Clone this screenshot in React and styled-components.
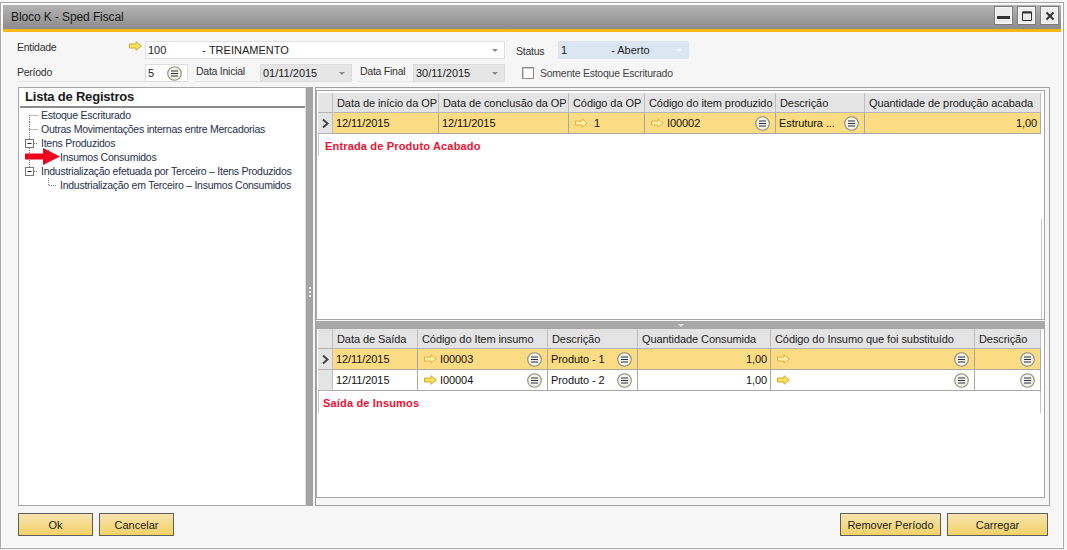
import styled, { createGlobalStyle, css } from "styled-components";

const GlobalStyle = createGlobalStyle`
  html, body {
    margin: 0;
    padding: 0;
    background: #fff;
    overflow: hidden;
  }
  body {
    font-family: "Liberation Sans", Arial, sans-serif;
    font-size: 11px;
    color: #1c1c1c;
  }
  * { box-sizing: border-box; }
`;

const narrowText = css`
  font-size: 10.5px;
  letter-spacing: -0.25px;
`;

const Page = styled.div`
  width: 1067px;
  height: 550px;
  padding: 2px 3px 1px 0;
  background: #f6f6f6;
`;

const Win = styled.div`
  height: 547px;
  border: 1px solid #a6a6a6;
  background: #f6f6f6;
  display: flex;
  flex-direction: column;
  box-shadow: inset 0 0 0 1px #fff;
  padding: 2px 2px 0 2px;
`;

const TitleBar = styled.div`
  height: 27px;
  flex: none;
  background: linear-gradient(#b4b4b4, #8c8c8c);
  border-bottom: 3px solid #fdb913;
  display: flex;
  align-items: center;
  padding: 0 2px 3px 8px;
  font-size: 12px;
  letter-spacing: -0.1px;
  color: #1a1a1a;
`;

const TitleText = styled.span`
  flex: 1;
  padding-top: 2px;
`;

const WinButtons = styled.div`
  display: flex;
  gap: 4px;
`;

const WinBtn = styled.div`
  width: 19px;
  height: 19px;
  background: #ececec;
  border: 1px solid #7c7c7c;
  box-shadow: inset 0 0 0 1px #f7f7f7;
  display: flex;
  align-items: center;
  justify-content: center;
`;

const Body = styled.div`
  flex: 1;
  min-height: 0;
  display: flex;
  flex-direction: column;
  padding: 9px 0 12px 15px;
`;

const HeadGrid = styled.div`
  flex: none;
  display: flex;
  flex-direction: column;
  gap: 5px;
  height: 46px;
`;

const HeadRow = styled.div`
  display: flex;
  height: 18px;
`;

const Label = styled.div`
  ${narrowText}
  width: ${(p) => p.$w}px;
  height: 18px;
  flex: none;
  margin-left: ${(p) => p.$ml || 0}px;
  border-bottom: ${(p) => (p.$plain ? "0" : "1px solid #e4e4e4")};
  display: flex;
  align-items: ${(p) => (p.$top ? "flex-start" : "center")};
  justify-content: space-between;
  padding: ${(p) => p.$pt || 0}px 3px ${(p) => p.$pb || 0}px ${(p) => p.$pl ?? 0}px;
  color: #333;
  white-space: nowrap;
`;

const Field = styled.div`
  width: ${(p) => p.$w}px;
  height: 18px;
  flex: none;
  border: 1px solid ${(p) => p.$border || "#dcdcdc"};
  background: ${(p) => p.$bg || "#fff"};
  display: flex;
  align-items: center;
  padding: 0 2px;
  color: #1c1c1c;
`;

const Gap = styled.span`
  width: ${(p) => p.$w}px;
  flex: none;
`;

const Caret = styled.span`
  margin-left: auto;
  margin-right: 4px;
  width: 0;
  height: 0;
  border-left: 3px solid transparent;
  border-right: 3px solid transparent;
  border-top: 3px solid ${(p) => p.$c || "#8a8a8a"};
`;

const SplitMark = styled(Caret)`
  margin: 3px 0 0;
`;

const Trail = styled.span`
  margin-left: auto;
  margin-right: 3px;
  display: flex;
`;

const CheckWrap = styled.label`
  ${narrowText}
  display: flex;
  align-items: center;
  margin-left: 17px;
  gap: 6px;
  color: #444;
  white-space: nowrap;
`;

const CheckBox = styled.span`
  width: 12px;
  height: 12px;
  background: #fff;
  border: 1px solid #8a8a8a;
  box-shadow: inset 1px 1px 0 #ccc;
`;

const Main = styled.div`
  flex: 1;
  min-height: 0;
  display: flex;
`;

const TreePanel = styled.div`
  width: 288px;
  flex: none;
  background: #fff;
  border: 1px solid #a6a6a6;
  border-right: 1px solid #ddd;
  position: relative;
`;

const TreeHead = styled.div`
  height: 20px;
  margin: 0 0 0 1px;
  border-bottom: 2px solid #8c8c8c;
  padding-left: 5px;
  font-size: 13px;
  font-weight: 700;
  letter-spacing: -0.2px;
  line-height: 18px;
  color: #1a1a1a;
`;

const TreeRow = styled.div`
  ${narrowText}
  display: flex;
  height: 14px;
  align-items: center;
  color: #26304a;
  white-space: nowrap;
`;

const RedArrow = styled.svg`
  position: absolute;
  left: 6px;
  top: 60px;
`;

const VSplit = styled.div`
  width: 9px;
  flex: none;
  display: flex;
  align-items: center;
  justify-content: center;
  background: linear-gradient(90deg, #a4a4a4 0 7px, #f6f6f6 7px);
  padding-right: 2px;
`;

const Dots = styled.div`
  width: 2px;
  height: 12px;
  background: repeating-linear-gradient(#eee 0 2px, transparent 2px 4px);
  margin-bottom: 8px;
`;

const Frame = styled.div`
  width: 735px;
  flex: none;
  border: 1px solid #a0a0a0;
  padding: 2px 4px 6px 0;
  display: flex;
  flex-direction: column;
`;

const Pane = styled.div`
  background: #fff;
  border: 1px solid #a6a6a6;
  padding: ${(p) => p.$pt}px 1px 0 1px;
  height: ${(p) => p.$h}px;
  flex: none;
  display: flex;
  flex-direction: column;
`;

const HSplit = styled.div`
  height: 7px;
  margin-top: 1px;
  flex: none;
  background: #a8a8a8;
  display: flex;
  justify-content: center;
`;

const GridTable = styled.div`
  flex: none;
  display: grid;
  grid-template-columns: ${(p) => p.$cols};
  grid-template-rows: 20px;
  grid-auto-rows: 21px;
  letter-spacing: -0.08px;
`;

const HeadCell = styled.div`
  background: #e4e4e4;
  border-right: 1px solid #bdbdbd;
  border-bottom: 1px solid #b4b4b4;
  display: flex;
  align-items: center;
  padding-left: 4px;
  color: #222;
  white-space: nowrap;
  overflow: hidden;
  &:last-child { border-right: 0; }
`;

const RowHead = styled.div`
  background: #e4e4e4;
  border-right: 1px solid #bdbdbd;
  border-bottom: 1px solid #b4b4b4;
  display: flex;
  align-items: center;
  justify-content: center;
`;

const Cell = styled.div`
  background: ${(p) => (p.$sel ? "#fcdc82" : "#fff")};
  border-right: 1px solid #a8a8a8;
  border-bottom: 1px solid #a8a8a8;
  display: flex;
  align-items: center;
  justify-content: ${(p) => (p.$num ? "flex-end" : "flex-start")};
  padding: 0 ${(p) => (p.$num ? 3 : 5)}px 0 ${(p) => (p.$link ? 6 : 3)}px;
  gap: 3px;
  color: #111;
  white-space: nowrap;
  overflow: hidden;
`;

const CellText = styled.span`
  flex: 1;
`;

const Note = styled.div`
  flex: none;
  height: 22px;
  margin-right: ${(p) => (p.$edge ? 2 : 0)}px;
  border-left: 1px solid #c4c4c4;
  border-right: ${(p) => (p.$edge ? "1px solid #c4c4c4" : "0")};
  color: #ee1133;
  font-weight: 700;
  font-size: 11px;
  letter-spacing: 0.17px;
  padding: 6px 0 0 ${(p) => p.$pl}px;
`;

const PaneRest = styled.div`
  flex: 1;
  margin: 63px 1px 0 0;
  border-right: 1px solid #c4c4c4;
`;

const Footer = styled.div`
  flex: none;
  display: flex;
  justify-content: space-between;
  margin-top: 7px;
  padding-right: 13px;
`;

const BtnGroup = styled.div`
  display: flex;
  gap: 6px;
`;

const Button = styled.button`
  width: ${(p) => p.$w}px;
  height: 23px;
  border: 1px solid #5e5e5e;
  background: linear-gradient(#f6e3ae, #f4d267);
  font: inherit;
  color: #1c1c1c;
  padding: 0;
`;

const LinkArrow = ({ pale }) => (
  <svg width="13" height="10" viewBox="0 0 13 10" style={{ flex: "none" }}>
    <path
      d="M0.5 3 H7 V0.7 L12.3 5 L7 9.3 V7 H0.5 Z"
      fill={pale ? "#fdeca0" : "#fbe35e"}
      stroke={pale ? "#d9b84a" : "#cfa92c"}
      strokeWidth="1"
    />
  </svg>
);

const ChooseIcon = () => (
  <svg width="15" height="15" viewBox="0 0 15 15" style={{ flex: "none" }}>
    <circle cx="7.5" cy="7.5" r="6.8" fill="#f3f1e2" stroke="#8b8b85" strokeWidth="1.1" />
    <path d="M4 5 H11 M4 7.5 H11 M4 10 H11" stroke="#26344f" strokeWidth="1.1" />
  </svg>
);

const RowMark = () => (
  <svg width="7" height="9" viewBox="0 0 7 9">
    <path d="M1 0.5 L5.5 4.5 L1 8.5" fill="none" stroke="#444" strokeWidth="2" />
  </svg>
);

const linesByKind = {
  first: { w: 22, d: "M10.5 7 V14 M10.5 7.5 H19" },
  mid: { w: 22, d: "M10.5 0 V14 M10.5 7.5 H19" },
  open: { w: 22, d: "M10.5 0 V14 M15 7.5 H19", box: true },
  openLast: { w: 22, d: "M10.5 0 V3 M15 7.5 H19", box: true },
  childMid: { w: 41, d: "M10.5 0 V14 M29.5 0 V7.5 H38" },
  childLast: { w: 41, d: "M29.5 0 V7.5 H38" },
};

const TreeLines = ({ kind }) => {
  const { w, d, box } = linesByKind[kind];
  return (
    <svg width={w} height="14" viewBox={`0 0 ${w} 14`} style={{ flex: "none" }}>
      <path d={d} stroke="#777" strokeWidth="1" strokeDasharray="1 1" fill="none" />
      {box && (
        <>
          <rect x="6.5" y="3.5" width="8" height="8" fill="#fff" stroke="#777" />
          <path d="M8.5 7.5 H12.5" stroke="#222" />
        </>
      )}
    </svg>
  );
};

const treeRows = [
  { kind: "first", text: "Estoque Escriturado" },
  { kind: "mid", text: "Outras Movimentações internas entre Mercadorias" },
  { kind: "open", text: "Itens Produzidos" },
  { kind: "childMid", text: "Insumos Consumidos" },
  { kind: "openLast", text: "Industrialização efetuada por Terceiro – Itens Produzidos" },
  { kind: "childLast", text: "Industrialização em Terceiro – Insumos Consumidos" },
];

const topCols = "15px 106px 130px 76px 131px 89px 176px";
const bottomCols = "15px 85px 130px 90px 133px 204px 66px";

const App = () => (
  <Page>
    <GlobalStyle />
    <Win>
      <TitleBar>
        <TitleText>Bloco K - Sped Fiscal</TitleText>
        <WinButtons>
          <WinBtn>
            <svg width="13" height="13" viewBox="0 0 13 13"><rect x="0" y="7" width="13" height="3" fill="#333" /></svg>
          </WinBtn>
          <WinBtn>
            <svg width="10" height="10" viewBox="0 0 10 10"><path d="M0.5 1 H9.5 V9.5 H0.5 Z" fill="none" stroke="#333" strokeWidth="1" /><path d="M0.5 1.5 H9.5" stroke="#333" strokeWidth="2" /></svg>
          </WinBtn>
          <WinBtn>
            <svg width="10" height="10" viewBox="0 0 10 10"><path d="M1.5 1.5 L8.5 8.5 M8.5 1.5 L1.5 8.5" stroke="#333" strokeWidth="2" /></svg>
          </WinBtn>
        </WinButtons>
      </TitleBar>
      <Body>
        <HeadGrid>
          <HeadRow>
            <Label $w={128} $ml={-1} $top $plain>
              Entidade
              <LinkArrow />
            </Label>
            <Field $w={360} $border="#e0e0e0">
              100
              <Gap $w={36} />
              - TREINAMENTO
              <Caret />
            </Field>
            <Label $w={42} $ml={11} $plain $pt={2}>Status</Label>
            <Field $w={131} $bg="#dce6f3" $border="#dce6f3">
              1
              <Gap $w={44} />
              - Aberto
              <Caret $c="#f4f6fa" />
            </Field>
          </HeadRow>
          <HeadRow>
            <Label $w={128} $ml={-1} $pb={2}>Período</Label>
            <Field $w={43}>
              5
              <Trail><ChooseIcon /></Trail>
            </Field>
            <Label $w={66} $ml={6} $pl={2} $pt={1} $top>Data Inicial</Label>
            <Field $w={92} $bg="#e6e6e6">
              01/11/2015
              <Caret />
            </Field>
            <Label $w={55} $ml={6} $pl={2} $pt={1} $top>Data Final</Label>
            <Field $w={92} $bg="#e6e6e6">
              30/11/2015
              <Caret />
            </Field>
            <CheckWrap>
              <CheckBox />
              Somente Estoque Escriturado
            </CheckWrap>
          </HeadRow>
        </HeadGrid>
        <Main>
          <TreePanel>
            <TreeHead>Lista de Registros</TreeHead>
            {treeRows.map((r) => (
              <TreeRow key={r.text}>
                <TreeLines kind={r.kind} />
                {r.text}
              </TreeRow>
            ))}
            <RedArrow width="35" height="17" viewBox="0 0 35 17">
              <path d="M0 5.5 H18 V0 L35 8.5 L18 17 V11.5 H0 Z" fill="#f0001c" />
            </RedArrow>
          </TreePanel>
          <VSplit><Dots /></VSplit>
          <Frame>
            <Pane $h={230} $pt={2}>
              <GridTable $cols={topCols}>
                <HeadCell />
                <HeadCell>Data de início da OP</HeadCell>
                <HeadCell>Data de conclusão da OP</HeadCell>
                <HeadCell>Código da OP</HeadCell>
                <HeadCell>Código do item produzido</HeadCell>
                <HeadCell>Descrição</HeadCell>
                <HeadCell>Quantidade de produção acabada</HeadCell>
                <RowHead><RowMark /></RowHead>
                <Cell $sel>12/11/2015</Cell>
                <Cell $sel>12/11/2015</Cell>
                <Cell $sel $link><LinkArrow pale />&nbsp;1</Cell>
                <Cell $sel $link><LinkArrow pale /><CellText>I00002</CellText><ChooseIcon /></Cell>
                <Cell $sel><CellText>Estrutura ...</CellText><ChooseIcon /></Cell>
                <Cell $sel $num>1,00</Cell>
              </GridTable>
              <Note $pl={6}>Entrada de Produto Acabado</Note>
              <PaneRest />
            </Pane>
            <HSplit>
              <SplitMark $c="#e4e4e4" />
            </HSplit>
            <Pane $h={170} $pt={0}>
              <GridTable $cols={bottomCols}>
                <HeadCell />
                <HeadCell>Data de Saída</HeadCell>
                <HeadCell>Código do Item insumo</HeadCell>
                <HeadCell>Descrição</HeadCell>
                <HeadCell>Quantidade Consumida</HeadCell>
                <HeadCell>Código do Insumo que foi substituído</HeadCell>
                <HeadCell>Descrição</HeadCell>
                <RowHead><RowMark /></RowHead>
                <Cell $sel>12/11/2015</Cell>
                <Cell $sel $link><LinkArrow pale /><CellText>I00003</CellText><ChooseIcon /></Cell>
                <Cell $sel><CellText>Produto - 1</CellText><ChooseIcon /></Cell>
                <Cell $sel $num>1,00</Cell>
                <Cell $sel $link><LinkArrow pale /><CellText /><ChooseIcon /></Cell>
                <Cell $sel><CellText /><ChooseIcon /></Cell>
                <RowHead />
                <Cell>12/11/2015</Cell>
                <Cell $link><LinkArrow /><CellText>I00004</CellText><ChooseIcon /></Cell>
                <Cell><CellText>Produto - 2</CellText><ChooseIcon /></Cell>
                <Cell $num>1,00</Cell>
                <Cell $link><LinkArrow /><CellText /><ChooseIcon /></Cell>
                <Cell><CellText /><ChooseIcon /></Cell>
              </GridTable>
              <Note $pl={4} $edge>Saída de Insumos</Note>
            </Pane>
          </Frame>
        </Main>
        <Footer>
          <BtnGroup>
            <Button $w={75}>Ok</Button>
            <Button $w={75}>Cancelar</Button>
          </BtnGroup>
          <BtnGroup>
            <Button $w={101}>Remover Período</Button>
            <Button $w={101}>Carregar</Button>
          </BtnGroup>
        </Footer>
      </Body>
    </Win>
  </Page>
);

export default App;
